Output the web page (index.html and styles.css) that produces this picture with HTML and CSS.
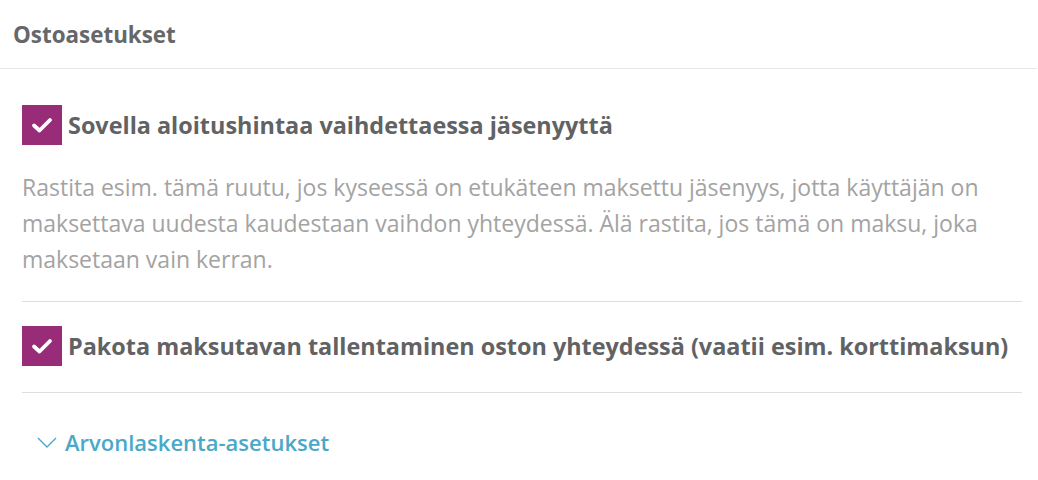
FILE: index.html
```html
<!DOCTYPE html>
<html lang="fi">
<head>
<meta charset="utf-8">
<link rel="stylesheet" href="styles.css">
</head>
<body>
<div class="panel">
  <div class="panel-header">Ostoasetukset</div>
  <div class="panel-body">
    <div class="option">
      <label class="check-row">
        <span class="checkbox"><svg viewBox="0 0 40 40" width="40" height="40"><path d="M12 20.5 L17.5 25.5 L28 15" fill="none" stroke="#fff" stroke-width="3.8" stroke-linecap="round" stroke-linejoin="round"/></svg></span>
        <span class="check-label">Sovella aloitushintaa vaihdettaessa jäsenyyttä</span>
      </label>
      <p class="help">Rastita esim. tämä ruutu, jos kyseessä on etukäteen maksettu jäsenyys, jotta käyttäjän on maksettava uudesta kaudestaan vaihdon yhteydessä. Älä rastita, jos tämä on maksu, joka maksetaan vain kerran.</p>
    </div>
    <div class="option option-single">
      <label class="check-row">
        <span class="checkbox"><svg viewBox="0 0 40 40" width="40" height="40"><path d="M12 20.5 L17.5 25.5 L28 15" fill="none" stroke="#fff" stroke-width="3.8" stroke-linecap="round" stroke-linejoin="round"/></svg></span>
        <span class="check-label">Pakota maksutavan tallentaminen oston yhteydessä (vaatii esim. korttimaksun)</span>
      </label>
    </div>
    <a class="toggle-link" href="#">
      <svg class="chevron" viewBox="0 0 20 11" width="20" height="11"><path d="M1 1 L10 10 L19 1" fill="none" stroke="#4aa8c8" stroke-width="1.4"/></svg>
      <span>Arvonlaskenta-asetukset</span>
    </a>
  </div>
</div>
</body>
</html>
```

FILE: styles.css
```css
html, body {
  margin: 0;
  padding: 0;
  background: #fff;
}
body {
  font-family: "Open Sans", "Noto Sans", sans-serif;
  color: #636466;
}
.panel-header {
  height: 69px;
  box-sizing: border-box;
  border-bottom: 1px solid #e6e6e6;
  padding: 0 13px;
  display: flex;
  align-items: center;
  font-size: 22.4px;
  font-weight: 700;
  color: #666769;
  margin-right: 1px;
}
.panel-body {
  padding: 36px 16px 0 22px;
}
.option {
  border-bottom: 1px solid #dedede;
  padding-bottom: 24px;
}
.option-single {
  padding-top: 24px;
  padding-bottom: 26px;
}
.check-row {
  display: flex;
  align-items: center;
  gap: 6px;
  cursor: pointer;
}
.checkbox {
  width: 40px;
  height: 40px;
  background: #992c78;
  flex: none;
  display: flex;
}
.check-label {
  font-size: 23.4px;
  font-weight: 700;
  color: #616264;
}
.help {
  margin: 24px 0 0;
  font-size: 23px;
  line-height: 36px;
  color: #a3a3a3;
}
.toggle-link {
  display: flex;
  align-items: center;
  gap: 8px;
  margin: 34px 0 0 15px;
  text-decoration: none;
  color: #4aa8c8;
  font-size: 22px;
  font-weight: 600;
}
.chevron {
  flex: none;
  margin-top: 1px;
}
```
